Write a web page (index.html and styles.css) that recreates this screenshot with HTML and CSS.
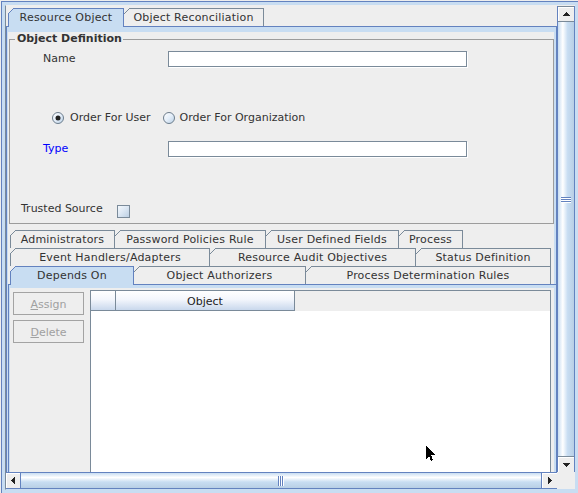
FILE: index.html
```html
<!DOCTYPE html>
<html>
<head>
<meta charset="utf-8">
<link rel="stylesheet" href="styles.css">
</head>
<body>
<div class="win">
  <div class="frame">
    <div class="sp">
      <div class="viewport">
        <div class="tp tp-main">
          <div class="tabrow">
            <div class="tab first sel t-res">Resource Object</div>
            <div class="tab t-recon">Object Reconciliation</div>
          </div>
          <div class="tp-content">
            <div class="panel">
              <fieldset class="group">
                <legend>Object Definition</legend>
                <div class="frow name-row"><span class="flabel">Name</span><span class="field"></span></div>
                <div class="radios">
                  <span class="radio r1"><svg class="rico" width="12" height="12" viewBox="0 0 12 12"><defs><linearGradient id="rg" x1="0" y1="0" x2="1" y2="1"><stop offset="0" stop-color="#ffffff"/><stop offset="0.5" stop-color="#e4eef9"/><stop offset="1" stop-color="#b8cfe5"/></linearGradient></defs><circle cx="6" cy="6" r="5.5" fill="url(#rg)" stroke="#6d7d8c"/><circle cx="6" cy="6" r="2.5" fill="#222"/></svg>Order For User</span>
                  <span class="radio r2"><svg class="rico" width="12" height="12" viewBox="0 0 12 12"><circle cx="6" cy="6" r="5.5" fill="url(#rg)" stroke="#6d7d8c"/></svg>Order For Organization</span>
                </div>
                <div class="frow type-row"><span class="flabel blue">Type</span><span class="field"></span></div>
                <div class="trusted"><span class="tlabel">Trusted Source</span><span class="check"></span></div>
              </fieldset>

              <div class="tp tp-sub">
                <div class="tabrow">
                  <div class="tab first t-admin">Administrators</div>
                  <div class="tab t-pwd">Password Policies Rule</div>
                  <div class="tab t-udf">User Defined Fields</div>
                  <div class="tab t-proc">Process</div>
                </div>
                <div class="tabrow">
                  <div class="tab first t-evt">Event Handlers/Adapters</div>
                  <div class="tab t-audit">Resource Audit Objectives</div>
                  <div class="tab t-status">Status Definition</div>
                </div>
                <div class="tabrow">
                  <div class="tab first sel t-dep">Depends On</div>
                  <div class="tab t-auth">Object Authorizers</div>
                  <div class="tab t-pdr">Process Determination Rules</div>
                </div>
                <div class="tp-content">
                  <div class="sub-inner">
                    <div class="btns">
                      <button class="btn" disabled><u>A</u>ssign</button>
                      <button class="btn" disabled><u>D</u>elete</button>
                    </div>
                    <div class="table">
                      <div class="thead">
                        <div class="th th0"></div>
                        <div class="th th1">Object</div>
                      </div>
                      <div class="tbody"></div>
                    </div>
                  </div>
                </div>
              </div>
            </div>
          </div>
        </div>
      </div>

      <div class="vscroll">
        <div class="vbtn up"><svg width="7" height="4" viewBox="0 0 7 4" shape-rendering="crispEdges"><rect x="3" y="0" width="1" height="1" fill="#222"/><rect x="2" y="1" width="3" height="1" fill="#222"/><rect x="1" y="2" width="5" height="1" fill="#222"/><rect x="0" y="3" width="7" height="1" fill="#222"/></svg></div>
        <div class="vthumb"><span class="vgrip"></span></div>
        <div class="vtrack"></div>
        <div class="vbtn down"><svg width="7" height="4" viewBox="0 0 7 4" shape-rendering="crispEdges"><rect x="0" y="0" width="7" height="1" fill="#222"/><rect x="1" y="1" width="5" height="1" fill="#222"/><rect x="2" y="2" width="3" height="1" fill="#222"/><rect x="3" y="3" width="1" height="1" fill="#222"/></svg></div>
      </div>

      <div class="hscroll">
        <div class="hbtn left"><svg width="4" height="7" viewBox="0 0 4 7" shape-rendering="crispEdges"><rect x="0" y="3" width="1" height="1" fill="#222"/><rect x="1" y="2" width="1" height="3" fill="#222"/><rect x="2" y="1" width="1" height="5" fill="#222"/><rect x="3" y="0" width="1" height="7" fill="#222"/></svg></div>
        <div class="hthumb"><span class="hgrip"></span></div>
        <div class="hbtn right"><svg width="4" height="7" viewBox="0 0 4 7" shape-rendering="crispEdges"><rect x="0" y="0" width="1" height="7" fill="#222"/><rect x="1" y="1" width="1" height="5" fill="#222"/><rect x="2" y="2" width="1" height="3" fill="#222"/><rect x="3" y="3" width="1" height="1" fill="#222"/></svg></div>
      </div>

      <div class="corner"></div>
    </div>
  </div>
  <svg class="cursor" width="10" height="16" viewBox="0 0 10 16" shape-rendering="crispEdges"><polygon points="0,0 0,13 3,10 5,15 7,14 5,9 9,9" fill="#000"/></svg>
</div>
</body>
</html>
```
FILE: styles.css
```css
html, body {
  margin: 0;
  padding: 0;
}

body {
  background: #eeeeee;
  font-family: "DejaVu Sans", "Noto Sans", sans-serif;
  font-size: 11px;
  color: #333333;
}

.win {
  position: relative;
  width: 578px;
  height: 493px;
  box-sizing: border-box;
  padding: 1px 0 0 1px;
  background: #eeeeee;
  overflow: hidden;
}

.frame {
  box-sizing: border-box;
  height: 492px;
  border-top: 1px solid #6382bf;
  border-left: 1px solid #6382bf;
  background: #c8ddf2;
  padding: 3px;
}

.sp {
  box-sizing: border-box;
  height: 485px;
  border-left: 1px solid #7a8a99;
  border-top: 1px solid #eeeeee;
  border-bottom: 1px solid #c8ddf2;
  display: grid;
  grid-template-columns: 551px 18px;
  grid-template-rows: 466px 17px;
  background: #eeeeee;
}

.viewport {
  overflow: hidden;
  background: #eeeeee;
}

/* ---------- tabbed panes ---------- */
.tp-main {
  padding-top: 2px;
}

.tabrow {
  display: flex;
  align-items: flex-start;
  height: 18px;
  padding-left: 2px;
}

.tab {
  position: relative;
  box-sizing: border-box;
  height: 18px;
  border-top: 1px solid #7a8a99;
  border-right: 1px solid #7a8a99;
  background: #eeeeee;
  line-height: 17px;
  text-align: center;
  white-space: nowrap;
  letter-spacing: 0.2px;
  color: #333333;
}

.tab.first {
  border-left: 1px solid #7a8a99;
}

.tab::before {
  content: "";
  position: absolute;
  top: -1px;
  left: 0;
  width: 6px;
  height: 6px;
  background: linear-gradient(to bottom right, #eeeeee 0 calc(50% - 0.6px), #7a8a99 calc(50% - 0.6px) calc(50% + 0.6px), transparent calc(50% + 0.6px));
}

.tab.first::before {
  left: -1px;
}

.tab.sel {
  height: 19px;
  margin-bottom: -1px;
  z-index: 2;
  background: #c8ddf2;
  border-color: #6382bf;
}

.tab.sel::before {
  background: linear-gradient(to bottom right, #eeeeee 0 calc(50% - 0.6px), #6382bf calc(50% - 0.6px) calc(50% + 0.6px), transparent calc(50% + 0.6px));
}

.t-res { width: 116px; }
.t-recon { width: 140px; }

.t-admin { width: 105px; }
.t-pwd { width: 151px; }
.t-udf { width: 133px; }
.t-proc { width: 64px; }

.t-evt { width: 200px; }
.t-audit { width: 206px; }
.t-status { width: 135px; }

.t-dep { width: 124px; }
.t-auth { width: 172px; }
.t-pdr { width: 245px; }

.tp-content {
  border: 1px solid #6382bf;
  background: #c8ddf2;
  padding: 3px 2px 0 1px;
}

.panel {
  background: #eeeeee;
  height: 470px;
  overflow: visible;
}

/* ---------- group box ---------- */
.group {
  margin: 2px 0 0 1px;
  padding: 0 0 5px 0;
  border: 1px solid #9c9c9c;
  min-inline-size: 0;
}

.group legend {
  margin-left: 5px;
  padding: 0 1px 0 2px;
  font-weight: bold;
  font-size: 11px;
  line-height: 14px;
  color: #333333;
}

.frow {
  display: flex;
  align-items: flex-start;
}

.name-row {
  margin-top: 5px;
}

.flabel {
  width: 125px;
  margin-left: 33px;
  line-height: 13px;
}

.name-row .flabel {
  margin-top: 1px;
}

.type-row .flabel {
  margin-top: 1px;
}

.flabel.blue {
  color: #0000ff;
}

.field {
  width: 299px;
  height: 16px;
  box-sizing: border-box;
  border: 1px solid #7a8a99;
  background: #ffffff;
  box-shadow: 1px 1px 0 #ffffff;
}

.radios {
  display: flex;
  align-items: center;
  height: 12px;
  margin-top: 45px;
  line-height: 14px;
}

.radio {
  display: flex;
  align-items: center;
  white-space: nowrap;
}

.r1 {
  margin-left: 42px;
}

.r1 .rico {
  margin-right: 6px;
}

.r2 {
  margin-left: 12px;
}

.r2 .rico {
  margin-right: 5px;
}

.radio .rico {
  margin-top: -1px;
}

.type-row {
  margin-top: 17px;
}

.trusted {
  display: flex;
  align-items: flex-start;
  margin-top: 44px;
}

.tlabel {
  width: 96px;
  margin-left: 11px;
  margin-top: 1px;
  line-height: 13px;
}

.check {
  width: 13px;
  height: 13px;
  margin-top: 4px;
  box-sizing: border-box;
  border: 1px solid #7a8a99;
  background: linear-gradient(135deg, #f4f8fc 0%, #dde8f4 45%, #bccfe3 100%);
}

/* ---------- sub tabbed pane ---------- */
.tp-sub {
  margin: 6px -3px 0 0;
}

.sub-inner {
  display: flex;
  align-items: flex-start;
  height: 200px;
  background: #eeeeee;
}

.btns {
  width: 80px;
  box-sizing: border-box;
  padding: 4px 0 0 3px;
  display: flex;
  flex-direction: column;
  gap: 5px;
}

.btn {
  width: 71px;
  height: 23px;
  box-sizing: border-box;
  margin: 0;
  padding: 1px 0 0;
  border: 1px solid #a3a3a3;
  background: #eeeeee;
  font-family: "DejaVu Sans", "Noto Sans", sans-serif;
  font-size: 11px;
  color: #a0a0a0;
  text-align: center;
}

.btn u {
  text-decoration: underline;
}

.table {
  width: 461px;
  height: 196px;
  margin-top: 2px;
  box-sizing: border-box;
  border: 1px solid #7a8a99;
  background: #ffffff;
}

.thead {
  display: flex;
  height: 20px;
  background: #eeeeee;
}

.th {
  box-sizing: border-box;
  height: 20px;
  border-right: 1px solid #7a8a99;
  border-bottom: 1px solid #7a8a99;
  background: linear-gradient(to bottom, #ffffff 0%, #f3f6fc 45%, #c9d8ec 100%);
  line-height: 21px;
  text-align: center;
  color: #222222;
}

.th0 {
  width: 25px;
}

.th1 {
  width: 179px;
}

/* ---------- scroll bars ---------- */
.vscroll {
  box-sizing: border-box;
  border-left: 1px solid #6382bf;
  border-right: 1px solid #6382bf;
  display: flex;
  flex-direction: column;
}

.vbtn {
  box-sizing: border-box;
  height: 16px;
  display: flex;
  align-items: center;
  justify-content: center;
  background: #eeeeee;
  box-shadow: inset 1px 1px 0 #ffffff;
}

.vbtn.up {
  border-top: 1px solid #7a8a99;
  border-bottom: 1px solid #7a8a99;
}

.vbtn.down {
  border-top: 1px solid #7a8a99;
}

.vthumb {
  height: 356px;
  display: flex;
  align-items: center;
  justify-content: center;
  background: linear-gradient(to right, #c8ddf2 0%, #ffffff 30%, #c8ddf2 60%, #b8cfe5 100%);
}

.vtrack {
  flex: 1;
  background: linear-gradient(to right, #c8ddf2 0%, #ffffff 30%, #c8ddf2 60%, #b8cfe5 100%);
}

.vgrip {
  width: 10px;
  height: 6px;
  background: repeating-linear-gradient(to bottom, #6382bf 0 1px, #ffffff 1px 2px);
}

.hscroll {
  box-sizing: border-box;
  border-top: 1px solid #6382bf;
  border-bottom: 1px solid #6382bf;
  display: flex;
}

.hbtn {
  box-sizing: border-box;
  display: flex;
  align-items: center;
  justify-content: center;
  background: #eeeeee;
  box-shadow: inset 1px 1px 0 #ffffff;
}

.hbtn.left {
  width: 15px;
  border-right: 1px solid #6382bf;
}

.hbtn.right {
  width: 16px;
  border-left: 1px solid #6382bf;
}

.hthumb {
  flex: 1;
  display: flex;
  align-items: center;
  justify-content: center;
  background: linear-gradient(to bottom, #c8ddf2 0%, #ffffff 30%, #c8ddf2 60%, #b8cfe5 100%);
}

.hgrip {
  width: 6px;
  height: 10px;
  background: repeating-linear-gradient(to right, #6382bf 0 1px, #ffffff 1px 2px);
}

.corner {
  background: #eeeeee;
}

.cursor {
  position: absolute;
  left: 426px;
  top: 446px;
}
```
